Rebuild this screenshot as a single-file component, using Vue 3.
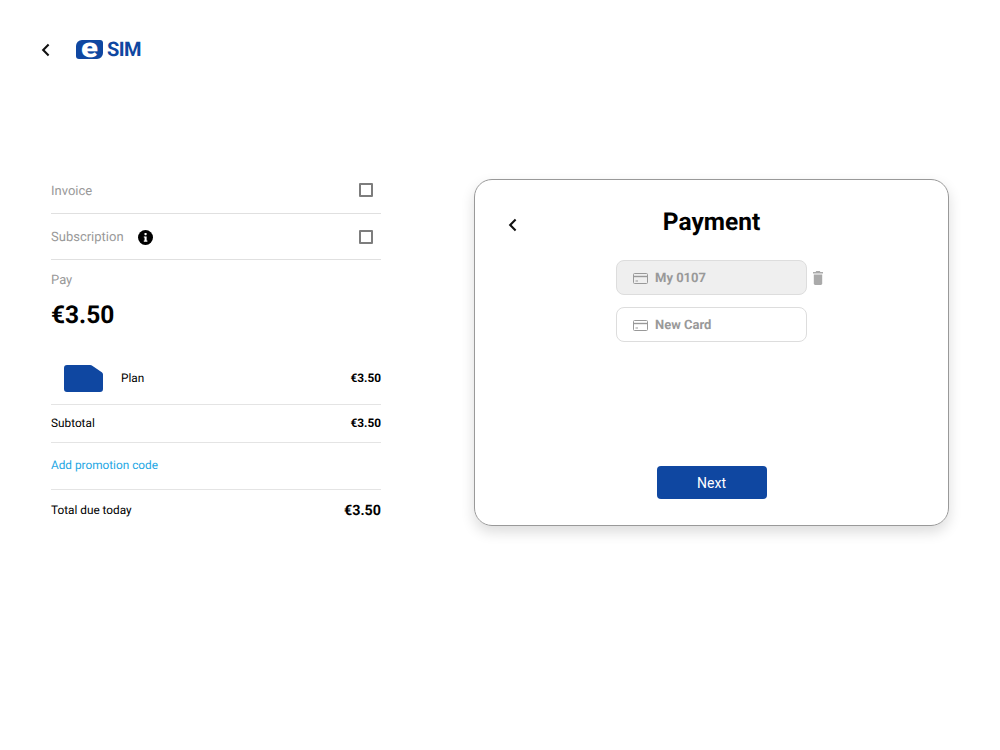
<template>
  <div class="page">
    <header class="top-bar">
      <button class="back-btn">
        <svg viewBox="0 0 12 16" width="12" height="16" fill="none">
          <path d="M8.6 2.6L3.2 8L8.6 13.4" stroke="#111" stroke-width="2.1" />
        </svg>
      </button>
      <div class="logo">
        <span class="logo-badge"><span class="logo-e">e</span></span>
        <span class="logo-text">SIM</span>
      </div>
    </header>

    <main class="content">
      <section class="summary">
        <div class="option-row">
          <div class="option-label">Invoice</div>
          <span class="checkbox"></span>
        </div>
        <div class="option-row">
          <div class="option-label">
            Subscription
            <svg class="info-icon" viewBox="0 0 16 16" width="15" height="15">
              <circle cx="8" cy="8" r="8" fill="#000" />
              <rect x="6.9" y="3.2" width="2.3" height="2.3" rx="0.6" fill="#fff" />
              <path d="M6.2 6.8H9.2V11.3H10V12.6H6.2V11.3H7V8.1H6.2Z" fill="#fff" />
            </svg>
          </div>
          <span class="checkbox"></span>
        </div>

        <div class="pay-label">Pay</div>
        <div class="pay-amount">{{ price }}</div>

        <div class="line plan-line">
          <div class="plan-name">
            <svg class="sim-icon" viewBox="0 0 39 27" width="39" height="27">
              <path d="M3 0H26Q27.5 0 28.6 .9L37.8 7.2Q39 8.2 39 9.6V24Q39 27 36 27H3Q0 27 0 24V3Q0 0 3 0Z" fill="#0f47a1" />
            </svg>
            <span>Plan</span>
          </div>
          <strong>{{ price }}</strong>
        </div>
        <div class="line subtotal-line">
          <span>Subtotal</span>
          <strong>{{ price }}</strong>
        </div>
        <div class="line promo-line">
          <a class="promo-link">Add promotion code</a>
        </div>
        <div class="total-line">
          <span>Total due today</span>
          <strong>{{ price }}</strong>
        </div>
      </section>

      <section class="card">
        <button class="back-btn card-back">
          <svg viewBox="0 0 12 16" width="12" height="16" fill="none">
            <path d="M8.6 2.6L3.2 8L8.6 13.4" stroke="#111" stroke-width="2.1" />
          </svg>
        </button>
        <h1 class="card-title">Payment</h1>

        <div class="methods">
          <div v-for="m in methods" :key="m.name" class="method" :class="{ selected: m.selected }">
            <svg viewBox="0 0 15 11" width="15" height="11" fill="none">
              <rect x="0.5" y="0.5" width="14" height="10" rx="1" stroke="#999" />
              <path d="M1 3.5H14" stroke="#999" stroke-width="1.4" />
              <path d="M2.5 8H5" stroke="#999" />
            </svg>
            <span>{{ m.name }}</span>
            <svg v-if="m.selected" class="trash" viewBox="0 0 10 14" width="10" height="14">
              <path d="M3.2 0H6.8L7.4 1H10V2.5H0V1H2.6Z" fill="#aaa" />
              <path d="M.8 3.5H9.2V12.6Q9.2 14 7.8 14H2.2Q.8 14 .8 12.6Z" fill="#aaa" />
            </svg>
          </div>
        </div>

        <button class="next-btn">Next</button>
      </section>
    </main>
  </div>
</template>

<script setup>
const price = '€3.50'
const methods = [
  { name: 'My 0107', selected: true },
  { name: 'New Card', selected: false }
]
</script>

<style>
body {
  background: #fff;
}
</style>

<style scoped>
.page {
  width: 1000px;
  height: 750px;
  overflow: hidden;
  font-family: Roboto, "Liberation Sans", sans-serif;
  color: #000;
  text-rendering: geometricPrecision;
}

.top-bar {
  display: flex;
  align-items: center;
  height: 18px;
  padding: 41px 0 0 40px;
}

.back-btn {
  display: flex;
  padding: 0;
  border: 0;
  background: none;
}

.logo {
  display: flex;
  align-items: center;
  height: 19px;
  margin-top: -2px;
  margin-left: 24px;
}

.logo-badge {
  width: 27px;
  height: 19px;
  background: #0f47a1;
  border-radius: 6px 3px 6px 3px;
  color: #fff;
  font-size: 27px;
  font-weight: 900;
  line-height: 16px;
  text-align: center;
}

.logo-e {
  display: block;
  height: 19px;
  transform: scaleX(1.15);
}

.logo-text {
  margin-left: 4px;
  color: #0f47a1;
  font-size: 20px;
  font-weight: 700;
  letter-spacing: -0.6px;
}

.content {
  display: flex;
  align-items: flex-start;
  padding: 108px 51px 0;
}

.summary {
  width: 330px;
  flex: none;
}

.option-row {
  display: flex;
  align-items: center;
  justify-content: space-between;
  height: 45px;
  padding-right: 8px;
  border-bottom: 1px solid #e0e0e0;
}

.option-row:first-child {
  height: 46px;
}

.option-label {
  display: flex;
  align-items: center;
  gap: 14px;
  padding-top: 2px;
  color: #999;
  font-size: 13px;
}

.checkbox {
  box-sizing: border-box;
  width: 14px;
  height: 14px;
  border: 2px solid #7d7d7d;
  border-radius: 1px;
}

.pay-label {
  margin-top: 13px;
  color: #999;
  font-size: 13px;
  line-height: 16px;
}

.pay-amount {
  margin-top: 8px;
  font-size: 24.5px;
  font-weight: 700;
  line-height: 36px;
}

.line {
  display: flex;
  align-items: center;
  justify-content: space-between;
  box-sizing: content-box;
  padding-bottom: 2px;
  border-bottom: 1px solid #e4e4e4;
  font-size: 11.8px;
}

.line strong,
.total-line strong {
  font-weight: 700;
}

.plan-line {
  height: 49px;
  margin-top: 20px;
}

.plan-name {
  display: flex;
  align-items: center;
  padding-left: 13px;
}

.sim-icon {
  margin-top: 2px;
  margin-right: 18px;
}

.subtotal-line {
  height: 35px;
}

.promo-line {
  height: 44px;
}

.promo-link {
  color: #1ea7e4;
}

.total-line {
  display: flex;
  align-items: center;
  justify-content: space-between;
  height: 41px;
  font-size: 11.8px;
}

.total-line span {
  margin-bottom: 2px;
}

.total-line strong {
  font-size: 14.3px;
}

.card {
  position: relative;
  display: flex;
  flex-direction: column;
  align-items: center;
  box-sizing: border-box;
  width: 475px;
  height: 347px;
  margin-top: 12px;
  margin-left: 93px;
  padding-top: 26px;
  border: 1px solid #999;
  border-radius: 18px;
  box-shadow: 0 6px 14px rgba(0, 0, 0, 0.14);
}

.card-back {
  position: absolute;
  top: 37px;
  left: 32px;
}

.card-title {
  margin: 0;
  font-size: 24.5px;
  font-weight: 700;
  line-height: 32px;
}

.methods {
  display: flex;
  flex-direction: column;
  gap: 12px;
  margin-top: 22px;
}

.method {
  position: relative;
  display: flex;
  align-items: center;
  gap: 7px;
  box-sizing: border-box;
  width: 191px;
  height: 35px;
  padding-top: 2px;
  padding-left: 16px;
  border: 1px solid #ddd;
  border-radius: 8px;
  color: #999;
  font-size: 13px;
  font-weight: 700;
}

.method.selected {
  background: #efefef;
}

.trash {
  position: absolute;
  right: -17px;
  top: 10px;
}

.next-btn {
  width: 110px;
  height: 33px;
  margin-top: 124px;
  border: 0;
  border-radius: 4px;
  background: #0f47a1;
  color: #fff;
  font-family: inherit;
  font-size: 14px;
}
</style>
